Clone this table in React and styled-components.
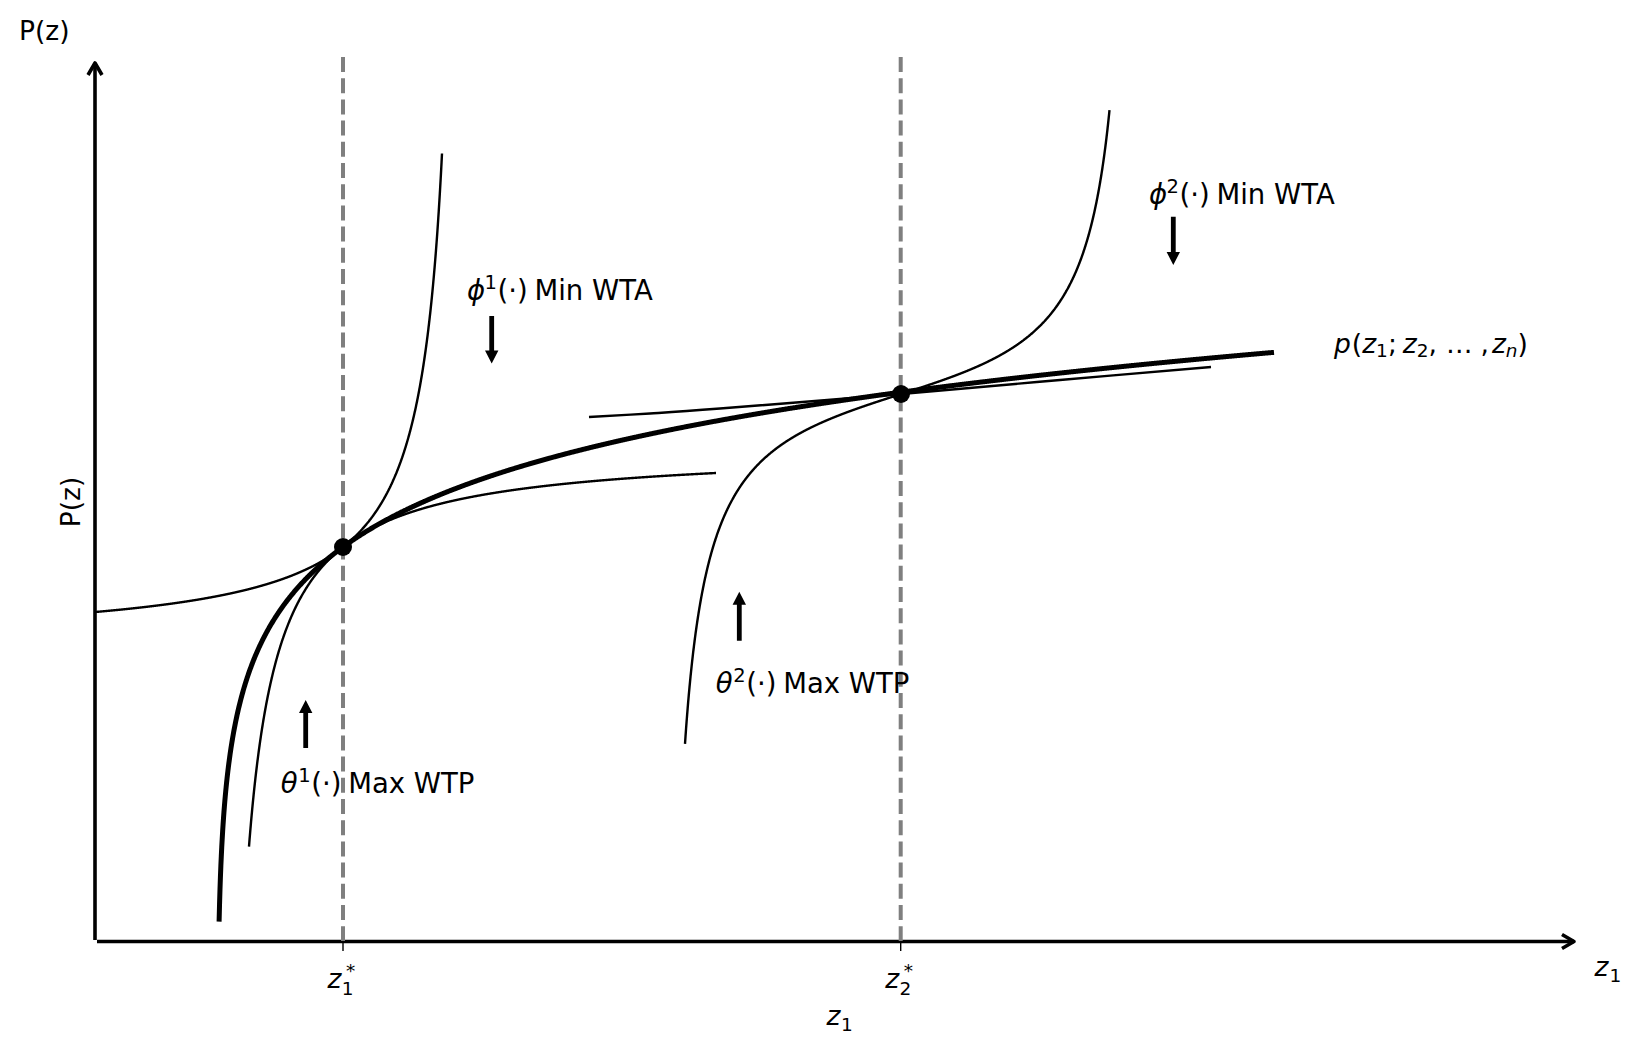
import React from 'react'
import styled, { createGlobalStyle } from 'styled-components'

const GlobalStyle = createGlobalStyle`
  html, body {
    margin: 0;
    padding: 0;
    background: #ffffff;
  }
`

const Figure = styled.div`
  width: 1640px;
  height: 1052px;
  background: #ffffff;
  overflow: hidden;
`

const Plot = styled.svg`
  display: block;
  width: 1640px;
  height: 1052px;
`

const AxisLine = styled.path`
  fill: none;
  stroke: #000;
  stroke-width: 3.6;
  stroke-linejoin: round;
`

const Guide = styled.line`
  stroke: #7f7f7f;
  stroke-width: 4;
  stroke-dasharray: 15 6.2;
`

const Tick = styled.line`
  stroke: #000;
  stroke-width: 1.4;
`

const Curve = styled.path`
  fill: none;
  stroke: #000;
  stroke-width: ${(p) => p.$w}px;
  stroke-linejoin: round;
`

const Marker = styled.circle`
  fill: #000;
`

const Pointer = styled.path`
  fill: #000;
`

const Label = styled.text`
  font-family: 'DejaVu Sans', 'Liberation Sans', sans-serif;
  font-size: ${(p) => p.$size || 26.5}px;
  fill: #000;
`

const Var = styled.tspan`
  font-style: italic;
`

const Small = styled.tspan`
  font-size: ${(p) => p.$size || 18.5}px;
  font-style: ${(p) => (p.$italic ? 'italic' : 'normal')};
`

// sample y = f(x) into a polyline
const trace = (f, x0, x1, n = 1600) => {
  const pts = []
  for (let i = 0; i <= n; i++) {
    const x = x0 + ((x1 - x0) * i) / n
    pts.push(`${x.toFixed(2)},${f(x).toFixed(2)}`)
  }
  return `M${pts.join(' L')}`
}

// catmull-rom through a few sampled points
const spline = (pts) => {
  let d = `M${pts[0][0]},${pts[0][1]}`
  for (let i = 0; i < pts.length - 1; i++) {
    const p0 = pts[i - 1] || pts[i]
    const p1 = pts[i]
    const p2 = pts[i + 1]
    const p3 = pts[i + 2] || p2
    const c1x = p1[0] + (p2[0] - p0[0]) / 6
    const c1y = p1[1] + (p2[1] - p0[1]) / 6
    const c2x = p2[0] - (p3[0] - p1[0]) / 6
    const c2y = p2[1] - (p3[1] - p1[1]) / 6
    d += ` C${c1x.toFixed(1)},${c1y.toFixed(1)} ${c2x.toFixed(1)},${c2y.toFixed(1)} ${p2[0]},${p2[1]}`
  }
  return d
}

const arrowPath = (x, tail, tip) => {
  const dir = tip > tail ? 1 : -1
  const base = tip - dir * 13
  return `M${x - 2.4},${tail} L${x - 2.4},${base} L${x - 6.7},${base} L${x},${tip} L${x + 6.7},${base} L${x + 2.4},${base} L${x + 2.4},${tail} Z`
}

// curves in pixel space
const bidRent = (x) => 989.5 - 91.5 * Math.log(x - 217)
const minWta1 = (x) => 644.4 - 12026 / (466.5 - x)
const maxWtp1 = (x) => 448.2 + 12350 / (x - 218)
const offer2 = (x) => 394.6 + 9243 / (x - 660) - 9304 / (1140 - x)

const tangent2 = [
  [589, 417], [650, 413.5], [720, 408.5], [901, 394], [1060, 380], [1211, 367],
]

const Annotation = ({ x, y, symbol, n, text }) => (
  <Label y={y} $size={27.5}>
    <Var x={x}>{symbol}</Var>
    <Small x={x + 17.6} dy={-11} $size={19.5}>{n}</Small>
    <tspan x={x + 30.5} dy={11}>(·)</tspan>
    <tspan x={x + 67.5}>{text}</tspan>
  </Label>
)

const StarTick = ({ x, n }) => (
  <Label>
    <Var x={x - 15.5} y={988}>z</Var>
    <Small x={x - 1.2} y={995}>{n}</Small>
    <Small x={x + 3} y={977}>*</Small>
  </Label>
)

const App = () => (
  <Figure>
    <GlobalStyle />
    <Plot viewBox="0 0 1640 1052">
      <Label x={19} y={40}>P(z)</Label>
      <Label textAnchor="middle" transform="translate(79.6,502) rotate(-90)">
        P(z)
      </Label>

      <AxisLine d="M95,940 L95,63" />
      <AxisLine d="M88,75 L95,63 L102,75" />
      <AxisLine d="M97,941.5 L1574,941.5" />
      <AxisLine d="M1562,934.5 L1574,941.5 L1562,948.5" />

      <Tick x1={343} y1={941} x2={343} y2={951} />
      <Tick x1={900.7} y1={941} x2={900.7} y2={951} />

      <Curve $w={2.4} d={trace(minWta1, 95, 442)} />
      <Curve $w={2.4} d={trace(maxWtp1, 249, 716)} />
      <Curve $w={2.4} d={trace(offer2, 685, 1109.5)} />
      <Curve $w={2.4} d={spline(tangent2)} />
      <Curve $w={5} d={trace(bidRent, 219.1, 1274, 2400)} />

      <Guide x1={343} y1={57} x2={343} y2={941} />
      <Guide x1={900.7} y1={57} x2={900.7} y2={941} />

      <Marker cx={343} cy={547} r={9} />
      <Marker cx={901} cy={394} r={9} />

      <Pointer d={arrowPath(491.7, 316, 363.5)} />
      <Pointer d={arrowPath(1173.3, 216.7, 265)} />
      <Pointer d={arrowPath(305.7, 748, 700)} />
      <Pointer d={arrowPath(739.3, 640.7, 591.7)} />

      <Annotation x={467} y={300} symbol="ϕ" n="1" text="Min WTA" />
      <Annotation x={1149} y={204} symbol="ϕ" n="2" text="Min WTA" />
      <Annotation x={280.7} y={793.3} symbol="θ" n="1" text="Max WTP" />
      <Annotation x={715.7} y={693.3} symbol="θ" n="2" text="Max WTP" />

      <Label x={1334} y={353.3}>
        <Var>p</Var>
        <tspan dx={1}>(</tspan>
        <Var>z</Var>
        <Small dy={4}>1</Small>
        <tspan dy={-4}>;</tspan>
        <Var dx={6}>z</Var>
        <Small dy={4}>2</Small>
        <tspan dy={-4}>,</tspan>
        <tspan dx={9}>…</tspan>
        <tspan dx={8}>,</tspan>
        <Var dx={3}>z</Var>
        <Small $italic dy={4}>n</Small>
        <tspan dy={-4}>)</tspan>
      </Label>

      <StarTick x={343} n="1" />
      <StarTick x={900.7} n="2" />

      <Label>
        <Var x={826.5} y={1025}>z</Var>
        <Small x={841} y={1030.5}>1</Small>
      </Label>
      <Label>
        <Var x={1594.5} y={976}>z</Var>
        <Small x={1609.5} y={981.5}>1</Small>
      </Label>
    </Plot>
  </Figure>
)

export default App
